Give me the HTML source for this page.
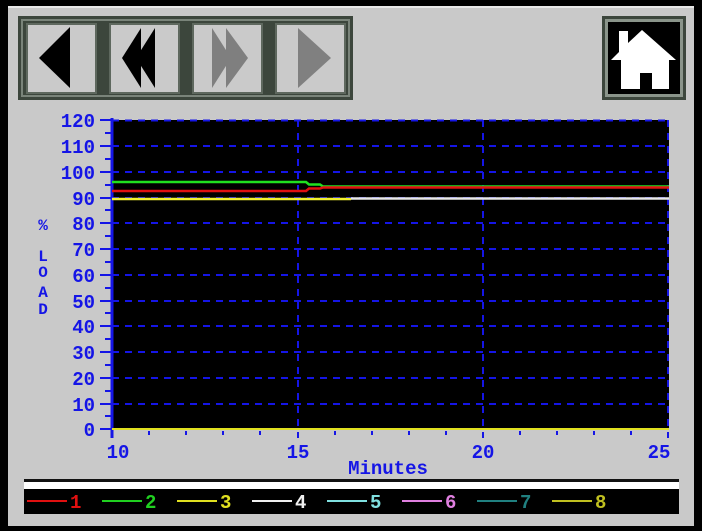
<!DOCTYPE html>
<html><head><meta charset="utf-8"><style>
html,body{margin:0;padding:0;background:#000;}
body{width:702px;height:531px;overflow:hidden;position:relative;}
svg{position:absolute;left:0;top:0;}
text{font-family:"Liberation Mono",monospace;font-weight:bold;}
</style></head><body>
<svg width="702" height="531" viewBox="0 0 702 531" xmlns="http://www.w3.org/2000/svg">
<rect x="0" y="0" width="702" height="531" fill="#000"/>
<rect x="8" y="6" width="686" height="520" fill="#c9c9c9"/>
<rect x="8" y="6" width="686" height="2" fill="#e8e8e8"/>
<!-- button group -->
<rect x="18" y="16" width="335" height="84" fill="#3c463c"/>
<rect x="21" y="19" width="329" height="78" fill="#7a847a"/>
<rect x="23" y="21" width="325" height="74" fill="#3c463c"/>
<g>
<rect x="26" y="23" width="71" height="71" fill="#5e685e"/><rect x="28" y="25" width="67" height="67" fill="#cacaca"/>
<rect x="109" y="23" width="71" height="71" fill="#5e685e"/><rect x="111" y="25" width="67" height="67" fill="#cacaca"/>
<rect x="192" y="23" width="71" height="71" fill="#5e685e"/><rect x="194" y="25" width="67" height="67" fill="#cacaca"/>
<rect x="275" y="23" width="71" height="71" fill="#5e685e"/><rect x="277" y="25" width="67" height="67" fill="#cacaca"/>
</g>
<polygon points="70,27 70,88 39,58" fill="#000"/>
<polygon points="141,28 141,88 122,58" fill="#000"/>
<polygon points="155,28 155,88 136,58" fill="#000"/>
<polygon points="212,28 212,88 231,58" fill="#7f7f7f"/>
<polygon points="226,28 226,88 248,58" fill="#7f7f7f"/>
<polygon points="298,28 298,88 331,58" fill="#808080"/>
<!-- home -->
<rect x="602" y="16" width="84" height="84" fill="#3c463c"/>
<rect x="605" y="19" width="78" height="78" fill="#8a948a"/>
<rect x="608" y="22" width="72" height="72" fill="#000"/>
<polygon points="642,30 676,60 669,60 669,89 652,89 652,73 640,73 640,89 621,89 621,60 611,60 619,52 619,31 628,31 628,43" fill="#fff"/>
<!-- plot -->
<rect x="112" y="120" width="557" height="309" fill="#000"/>
<g stroke="#1515e6" stroke-width="2" stroke-dasharray="7,6">
<line x1="112" y1="120.5" x2="669" y2="120.5"/>
<line x1="112" y1="146" x2="669" y2="146"/>
<line x1="112" y1="172" x2="669" y2="172"/>
<line x1="112" y1="198" x2="669" y2="198"/>
<line x1="112" y1="223" x2="669" y2="223"/>
<line x1="112" y1="249" x2="669" y2="249"/>
<line x1="112" y1="275" x2="669" y2="275"/>
<line x1="112" y1="301" x2="669" y2="301"/>
<line x1="112" y1="326" x2="669" y2="326"/>
<line x1="112" y1="352" x2="669" y2="352"/>
<line x1="112" y1="378" x2="669" y2="378"/>
<line x1="112" y1="404" x2="669" y2="404"/>
<line x1="298" y1="120" x2="298" y2="438"/>
<line x1="483" y1="120" x2="483" y2="438"/>
<line x1="668" y1="120" x2="668" y2="438"/>
</g>
<!-- y axis -->
<line x1="112" y1="118" x2="112" y2="438" stroke="#1515e6" stroke-width="3"/>
<g stroke="#1515e6" stroke-width="2">
<path d="M100 120h12M100 146h12M100 172h12M100 198h12M100 223h12M100 249h12M100 275h12M100 301h12M100 326h12M100 352h12M100 378h12M100 404h12M100 429h12"/>
<path d="M105 133h7M105 159h7M105 185h7M105 210h7M105 236h7M105 262h7M105 288h7M105 313h7M105 339h7M105 365h7M105 391h7M105 416h7"/>
<path d="M149 431v4M186 431v4M223 431v4M260 431v4M335 431v4M372 431v4M409 431v4M446 431v4M520 431v4M557 431v4M594 431v4M631 431v4"/>
</g>
<!-- data -->
<line x1="112" y1="429" x2="669" y2="429" stroke="#e0e020" stroke-width="2"/>
<polyline points="112,182 306,182 309,184.5 320,184.5 323,186.5 669,186.5" fill="none" stroke="#20e020" stroke-width="2.5"/>
<polyline points="112,191 306,191 309,188.5 320,188.5 323,187.5 669,187.5" fill="none" stroke="#e01010" stroke-width="2.5"/>
<line x1="351" y1="198.5" x2="669" y2="198.5" stroke="#e8e8e8" stroke-width="2.5"/>
<line x1="112" y1="199" x2="351" y2="199" stroke="#f0f030" stroke-width="2.5"/>
<!-- labels -->
<g fill="#1515e6" font-size="19" text-anchor="end">
<text x="95" y="127">120</text><text x="95" y="153">110</text><text x="95" y="179">100</text>
<text x="95" y="205">90</text><text x="95" y="230">80</text><text x="95" y="256">70</text>
<text x="95" y="282">60</text><text x="95" y="308">50</text><text x="95" y="333">40</text>
<text x="95" y="359">30</text><text x="95" y="385">20</text><text x="95" y="411">10</text>
<text x="95" y="436">0</text>
</g>
<g fill="#1515e6" font-size="19" text-anchor="middle">
<text x="118" y="458">10</text><text x="298" y="458">15</text><text x="483" y="458">20</text><text x="659" y="458">25</text>
<text x="388" y="474">Minutes</text>
<text x="43" y="230" font-size="16">%</text>
<text x="43" y="261" font-size="16">L</text><text x="43" y="277" font-size="16">O</text>
<text x="43" y="297" font-size="16">A</text><text x="43" y="314" font-size="16">D</text>
</g>
<!-- legend -->
<rect x="24" y="479" width="655" height="3" fill="#111"/>
<rect x="24" y="482" width="655" height="7" fill="#fff"/>
<rect x="24" y="489" width="655" height="25" fill="#000"/>
<g stroke-width="2">
<line x1="27" y1="501" x2="67" y2="501" stroke="#e01010"/>
<line x1="102" y1="501" x2="142" y2="501" stroke="#20d020"/>
<line x1="177" y1="501" x2="217" y2="501" stroke="#e0e020"/>
<line x1="252" y1="501" x2="292" y2="501" stroke="#f0f0f0"/>
<line x1="327" y1="501" x2="367" y2="501" stroke="#80e0e0"/>
<line x1="402" y1="501" x2="442" y2="501" stroke="#e080e0"/>
<line x1="477" y1="501" x2="517" y2="501" stroke="#208080"/>
<line x1="552" y1="501" x2="592" y2="501" stroke="#c0c020"/>
</g>
<g font-size="19" font-weight="normal">
<text x="70" y="508" fill="#e01010">1</text>
<text x="145" y="508" fill="#20d020">2</text>
<text x="220" y="508" fill="#e0e020">3</text>
<text x="295" y="508" fill="#f0f0f0">4</text>
<text x="370" y="508" fill="#80e0e0">5</text>
<text x="445" y="508" fill="#e080e0">6</text>
<text x="520" y="508" fill="#208080">7</text>
<text x="595" y="508" fill="#c0c020">8</text>
</g>
</svg>
</body></html>
